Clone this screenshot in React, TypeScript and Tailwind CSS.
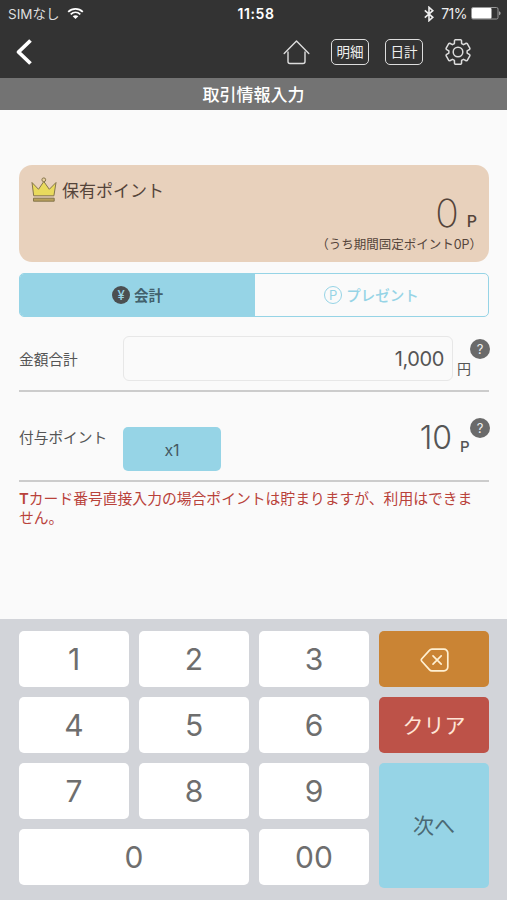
import type { ReactNode } from 'react'

const digitRows = [
  ['1', '2', '3'],
  ['4', '5', '6'],
  ['7', '8', '9'],
]

// six wide teeth, 60deg apart
const gearPoints = Array.from({ length: 6 }, (_, i) =>
  [
    [-23, 9.2],
    [-17, 12],
    [-13, 12.5],
    [13, 12.5],
    [17, 12],
    [23, 9.2],
  ].map(([deg, r]) => {
    const a = ((i * 60 + deg) * Math.PI) / 180
    return `${(13 + r * Math.sin(a)).toFixed(2)},${(13 - r * Math.cos(a)).toFixed(2)}`
  })
)
  .flat()
  .join(' ')

function WifiIcon() {
  return (
    <svg width="17" height="13" viewBox="0 0 17 13" fill="none" stroke="#fff" strokeWidth="1.8">
      <path d="M1.2 4.8C5.3.9 11.7.9 15.8 4.8" />
      <path d="M3.7 7.3C6.5 4.8 10.5 4.8 13.3 7.3" />
      <path d="M8.5 12 5.7 9.2C7.3 7.8 9.7 7.8 11.3 9.2Z" fill="#fff" stroke="none" />
    </svg>
  )
}

function BluetoothIcon() {
  return (
    <svg width="10" height="16" viewBox="0 0 10 16" fill="none" stroke="#eee" strokeWidth="1.6">
      <path d="M.8 4.3 8.8 11.3 5 14.7V1.3L8.8 4.7.8 11.7" />
    </svg>
  )
}

function BatteryIcon() {
  return (
    <svg width="30" height="13" viewBox="0 0 30 13">
      <rect x=".5" y=".5" width="26.5" height="11.5" rx="1.5" fill="none" stroke="#999" />
      <rect x="1" y="1" width="19.5" height="10.5" rx="1" fill="#fff" />
      <path d="M28.2 4.2c1.8.7 1.8 3.4 0 4.1z" fill="#bbb" />
    </svg>
  )
}

function HomeIcon() {
  return (
    <svg width="27" height="25" viewBox="0 0 27 25" fill="none" stroke="#ddd" strokeWidth="1.4" strokeLinecap="round" strokeLinejoin="round">
      <path d="M1.2 13.5 13.5 1 25.8 13.5" />
      <path d="M5 12v9.5a2 2 0 0 0 2 2h13a2 2 0 0 0 2-2V12" />
    </svg>
  )
}

function GearIcon() {
  return (
    <svg width="26" height="26" viewBox="0 0 26 26" fill="none" stroke="#ddd" strokeWidth="1.5" strokeLinejoin="round">
      <polygon points={gearPoints} />
      <circle cx="13" cy="13" r="4.8" />
    </svg>
  )
}

function CrownIcon() {
  return (
    <svg width="26" height="26" viewBox="0 0 26 26" stroke="#85764c" strokeWidth="1" strokeLinejoin="round">
      <path d="M2.7 18.8 1 5.5 7.5 12.3 12.8 4.5 18.3 12.3 25 5.5 22.9 18.8Z" fill="#e9da5d" />
      <circle cx="12.8" cy="2.8" r="1.9" fill="#e9d0a0" />
      <rect x="2.5" y="21.2" width="20.7" height="3" fill="#b8a05a" />
    </svg>
  )
}

function DeleteIcon() {
  return (
    <svg width="29" height="24" viewBox="0 0 29 24" fill="none" stroke="#fff0d2" strokeWidth="1.7" strokeLinecap="round" strokeLinejoin="round">
      <path d="M1.8 10.8 9.4 2.4Q10.4 1.2 12 1.2H24a3.8 3.8 0 0 1 3.8 3.8v14a3.8 3.8 0 0 1-3.8 3.8H12q-1.6 0-2.6-1.2L1.8 13.2q-1-1.2 0-2.4z" />
      <path d="m13 7.9 8.2 8.2M21.2 7.9 13 16.1" />
    </svg>
  )
}

function NavBox({ children }: { children: ReactNode }) {
  return (
    <button className="flex h-[26px] w-[38px] items-center justify-center rounded-[5px] border-[1.5px] border-[#ddd] pt-[2px] text-[13.5px] leading-none">
      {children}
    </button>
  )
}

function Help() {
  return (
    <button className="flex size-5 items-center justify-center rounded-full bg-[#6a6a6a] text-[13px] leading-none text-[#eee]">?</button>
  )
}

function Key({ label, className = '' }: { label: string; className?: string }) {
  return (
    <button className={`h-14 rounded-[5px] bg-white text-[30px] leading-none font-[370] text-[#6e6e6e] ${className}`}>{label}</button>
  )
}

export default function App() {
  return (
    <div className="flex h-[900px] w-[507px] flex-col overflow-hidden bg-[#fafafa] font-['Inter','Noto_Sans_CJK_JP',sans-serif] text-[#555]">
      <header className="h-[78px] bg-[#333] text-[#eee]">
        <div className="grid h-[27px] grid-cols-[1fr_auto_1fr] items-center pr-[6px] pl-2 text-[13.5px] leading-none">
          <div className="flex items-center gap-[8px] text-[#ddd]">
            <span className="pt-[2px]">SIMなし</span>
            <WifiIcon />
          </div>
          <span className="pt-px pl-[3px] text-[14px] font-semibold tracking-[0.6px] text-white">11:58</span>
          <div className="flex items-center justify-end">
            <BluetoothIcon />
            <span className="mr-[4px] ml-[7px] pt-px text-[14px] tracking-[-0.5px]">71%</span>
            <BatteryIcon />
          </div>
        </div>
        <div className="flex h-[50px] items-center pr-9 pl-[15px]">
          <svg width="18" height="26" viewBox="0 0 18 26" fill="none" stroke="#fff" strokeWidth="3.8" strokeLinejoin="round">
            <path d="M15.5 1.5 3.5 13l12 11.5" />
          </svg>
          <div className="ml-auto flex items-center">
            <HomeIcon />
            <div className="ml-[21px] flex gap-4">
              <NavBox>明細</NavBox>
              <NavBox>日計</NavBox>
            </div>
            <div className="ml-[22px]">
              <GearIcon />
            </div>
          </div>
        </div>
      </header>
      <h1 className="flex h-8 items-center justify-center bg-[#737373] pt-[3px] text-[17px] leading-none font-medium text-white">取引情報入力</h1>

      <main className="flex-1 pt-[55px] pr-[18px] pl-[19px]">
        <section className="flex h-[97px] flex-col rounded-[13px] bg-[#e8d1bc] px-3 text-[#54443a]">
          <div className="flex h-[49px] items-center gap-[5px] text-[17px] leading-none">
            <CrownIcon />
            <span className="pt-[3px]">保有ポイント</span>
          </div>
          <div className="-mt-[20px] flex h-[38px] items-baseline justify-end gap-2 leading-[38px]">
            <span className="text-[39px] font-extralight">0</span>
            <span className="text-[16px] font-medium">P</span>
          </div>
          <p className="-mr-[5px] mt-[3px] text-right text-[12.5px] leading-5">（うち期間固定ポイント0P）</p>
        </section>

        <div className="mt-[11px] flex h-11 overflow-hidden rounded-[5px] border-[1.5px] border-[#96d4e6] text-[14.5px]">
          <button className="flex w-[235px] items-center justify-center gap-1 bg-[#96d4e6] font-bold text-[#42616d]">
            <span className="flex size-[18px] items-center justify-center rounded-full bg-[#4b4f51] text-[13px] leading-none font-medium text-[#96d4e6]">¥</span>
            <span className="pt-[2px]">会計</span>
          </button>
          <button className="flex flex-1 items-center justify-center gap-1 font-medium text-[#96d4e6]">
            <span className="flex size-[18px] items-center justify-center rounded-full border-[1.3px] border-[#96d4e6] text-[13px] leading-none font-normal">P</span>
            <span className="pt-[2px]">プレゼント</span>
          </button>
        </div>

        <div className="mt-[19px] flex h-[56px] border-b-2 border-[#ccc]">
          <span className="mt-[14px] w-[104px] text-[14.7px] leading-5">金額合計</span>
          <div className="flex h-[45px] w-[331px] items-center justify-end rounded-[6px] border border-[#e7e7e7] pr-[8px] text-[20px] tracking-[-0.4px]">1,000</div>
          <span className="mt-[23px] ml-[4px] w-[13px] text-[14px] leading-5">円</span>
          <div className="mt-[3px] -mr-px ml-auto">
            <Help />
          </div>
        </div>

        <div className="flex h-[90px] border-b-2 border-[#ccc] pt-[26px]">
          <span className="mt-[10px] w-[104px] text-[14.7px] leading-5">付与ポイント</span>
          <button className="mt-[9px] h-11 w-[98px] rounded-[5px] bg-[#96d4e6] pt-px text-[16px] text-[#455962]">x1</button>
          <span className="mt-[2px] ml-auto text-[32px] leading-9 font-light">10</span>
          <span className="mt-[19px] ml-[8px] w-[10px] text-[15px] leading-5 font-medium">P</span>
          <div className="-mr-px">
            <Help />
          </div>
        </div>
        <p className="mt-[8px] text-[14.8px] leading-[19px] whitespace-nowrap text-[#b9423a]">
          <span className="font-semibold">T</span>カード番号直接入力の場合ポイントは貯まりますが、利用はできま
          <br />
          せん。
        </p>
      </main>

      <footer className="flex h-[281px] gap-[10px] bg-[#d2d4d9] pt-3 pr-[18px] pl-[19px]">
        <div className="grid w-[350px] auto-rows-[56px] grid-cols-3 gap-[10px]">
          {digitRows.flat().map((d) => (
            <Key key={d} label={d} />
          ))}
          <Key label="0" className="col-span-2" />
          <Key label="00" />
        </div>
        <div className="flex w-[110px] flex-col gap-[10px] text-[21px]">
          <button className="flex h-14 items-center justify-center rounded-[5px] bg-[#ca8434] pt-px">
            <DeleteIcon />
          </button>
          <button className="h-14 rounded-[5px] bg-[#bd5248] pt-[2px] text-[#ffe5d7]">クリア</button>
          <button className="h-[125px] rounded-[5px] bg-[#96d4e6] text-[#4b6974]">次へ</button>
        </div>
      </footer>
    </div>
  )
}
